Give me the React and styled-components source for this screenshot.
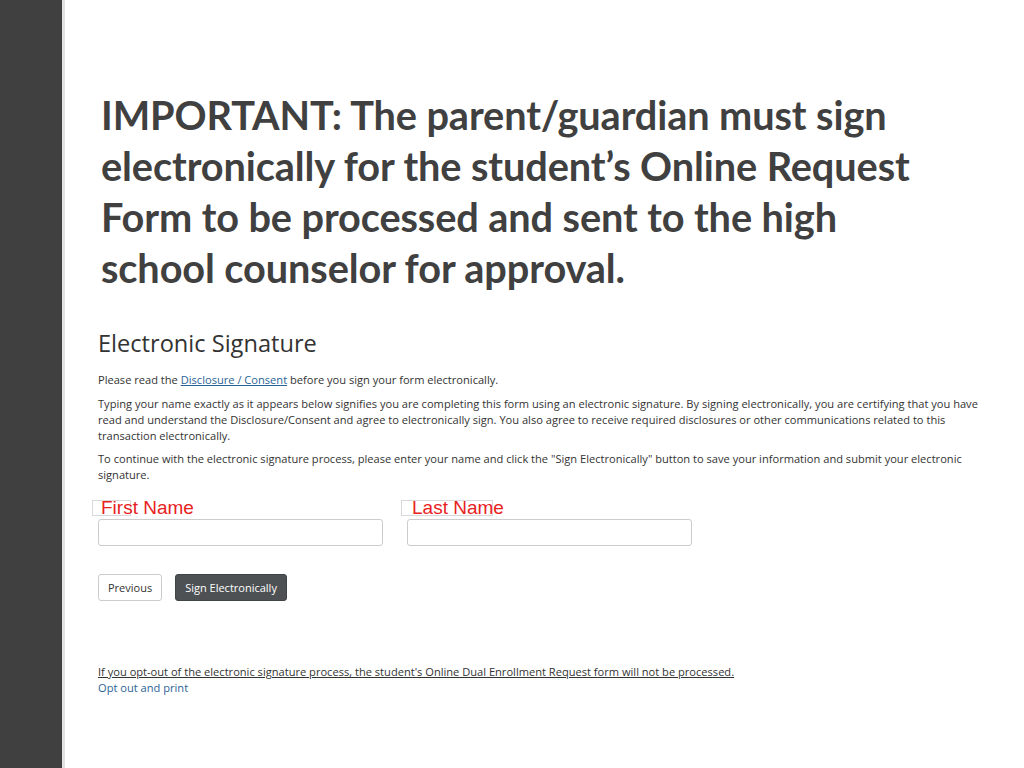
import styled, { createGlobalStyle } from "styled-components";

const GlobalStyle = createGlobalStyle`
  html, body {
    margin: 0;
    padding: 0;
    background: #ffffff;
  }
`;

function App() {
  return (
    <>
      <GlobalStyle />
      <Slide>
        <SideBar />
        <Content>
          <Title>
            IMPORTANT: The parent/guardian must sign electronically for the
            student’s Online Request Form to be processed and sent to the high
            school counselor for approval.
          </Title>
          <Form>
            <FormHeading>Electronic Signature</FormHeading>
            <Para>
              Please read the <Link href="#">Disclosure / Consent</Link> before
              you sign your form electronically.
            </Para>
            <Para>
              Typing your name exactly as it appears below signifies you are
              completing this form using an electronic signature. By signing
              electronically, you are certifying that you have read and
              understand the Disclosure/Consent and agree to electronically
              sign. You also agree to receive required disclosures or other
              communications related to this transaction electronically.
            </Para>
            <Para>
              To continue with the electronic signature process, please enter
              your name and click the "Sign Electronically" button to save your
              information and submit your electronic signature.
            </Para>
            <Fields>
              <Field>
                <Label $box={37} $shift={3}>First Name</Label>
                <Input type="text" />
              </Field>
              <Field>
                <Label $box={90} $shift={5}>Last Name</Label>
                <Input type="text" />
              </Field>
            </Fields>
            <Buttons>
              <Button>Previous</Button>
              <Button $primary>Sign Electronically</Button>
            </Buttons>
            <OptOut>
              <Notice>
                If you opt-out of the electronic signature process, the
                student's Online Dual Enrollment Request form will not be
                processed.
              </Notice>
              <PlainLink href="#">Opt out and print</PlainLink>
            </OptOut>
          </Form>
        </Content>
      </Slide>
    </>
  );
}

const Slide = styled.div`
  display: flex;
  width: 1024px;
  height: 768px;
  overflow: hidden;
  background: #fff;
`;

const SideBar = styled.div`
  width: 62px;
  flex-shrink: 0;
  background: #404040;
  border-right: 3px solid #e2e2e2;
`;

const Content = styled.div`
  flex: 1;
  padding: 89px 0 0 36px;
`;

const Title = styled.h1`
  margin: 0;
  width: 850px;
  font-family: Lato, "Liberation Sans", sans-serif;
  font-weight: 700;
  font-size: 39.7px;
  line-height: 51px;
  letter-spacing: -0.1px;
  color: #404040;
`;

const Form = styled.div`
  margin-top: 35px;
  margin-left: -3px;
  width: 888px;
  font-family: "Open Sans", "Liberation Sans", sans-serif;
  color: #333;
`;

const FormHeading = styled.h2`
  margin: 0 0 14px;
  font-weight: 400;
  font-size: 23.6px;
  line-height: 30px;
  color: #333;
`;

const Para = styled.p`
  margin: 0 0 7.5px;
  font-size: 11.1px;
  line-height: 16px;
`;

const Link = styled.a`
  color: #2a6496;
  text-decoration: underline;
`;

const Fields = styled.div`
  display: flex;
  gap: 24px;
  margin-top: 14px;
`;

const Field = styled.div`
  display: flex;
  flex-direction: column;
  width: 285px;
`;

const Label = styled.span`
  position: relative;
  isolation: isolate;
  align-self: flex-start;
  font-family: "Liberation Sans", Arial, sans-serif;
  font-size: 19px;
  line-height: 21px;
  color: #e8221e;
  padding-left: ${(p) => p.$shift}px;

  &::before {
    content: "";
    position: absolute;
    left: -6px;
    top: 3px;
    width: ${(p) => p.$box}px;
    height: 14px;
    border: 1px solid #d9d9d9;
    z-index: -1;
  }
`;

const Input = styled.input`
  box-sizing: border-box;
  height: 27px;
  margin-top: 1px;
  border: 1px solid #cccccc;
  border-radius: 3px;
  background: #fff;
`;

const Buttons = styled.div`
  display: flex;
  gap: 13px;
  margin-top: 28px;
`;

const Button = styled.button`
  box-sizing: border-box;
  height: 27px;
  padding: 0 9px;
  border-radius: 3px;
  font-family: "Open Sans", "Liberation Sans", sans-serif;
  font-size: 11px;
  border: 1px solid ${(p) => (p.$primary ? "#3f4447" : "#cccccc")};
  background: ${(p) => (p.$primary ? "#4d5154" : "#ffffff")};
  color: ${(p) => (p.$primary ? "#ffffff" : "#333333")};
`;

const OptOut = styled.div`
  margin-top: 63px;
  display: flex;
  flex-direction: column;
  font-size: 11.1px;
  line-height: 16px;
`;

const Notice = styled.span`
  text-decoration: underline;
  color: #333;
`;

const PlainLink = styled.a`
  color: #2a6496;
  text-decoration: none;
`;

export default App;
